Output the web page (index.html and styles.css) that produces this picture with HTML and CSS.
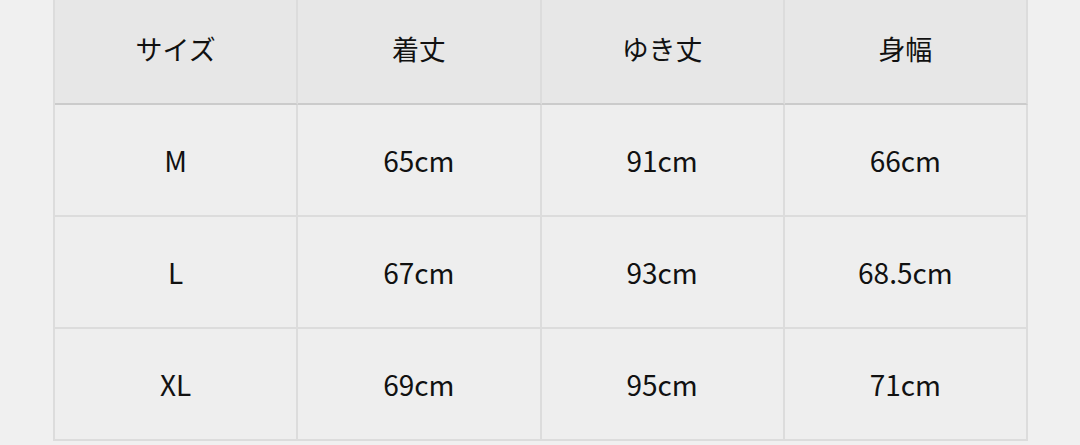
FILE: index.html
```html
<!DOCTYPE html>
<html lang="ja">
<head>
<meta charset="utf-8">
<link rel="stylesheet" href="styles.css">
</head>
<body>
<div class="size-table">
  <div class="cell head">サイズ</div>
  <div class="cell head">着丈</div>
  <div class="cell head">ゆき丈</div>
  <div class="cell head">身幅</div>

  <div class="cell">M</div>
  <div class="cell">65cm</div>
  <div class="cell">91cm</div>
  <div class="cell">66cm</div>

  <div class="cell">L</div>
  <div class="cell">67cm</div>
  <div class="cell">93cm</div>
  <div class="cell">68.5cm</div>

  <div class="cell">XL</div>
  <div class="cell">69cm</div>
  <div class="cell">95cm</div>
  <div class="cell">71cm</div>
</div>
</body>
</html>
```

FILE: styles.css
```css
html, body {
  margin: 0;
  padding: 0;
  background: #f0f0f0;
}

body {
  font-family: "Noto Sans CJK JP", "Noto Sans", sans-serif;
  color: #111;
  overflow: hidden;
}

.size-table {
  box-sizing: border-box;
  width: 975px;
  margin: -7px 0 0 53px;
  display: grid;
  grid-template-columns: repeat(4, 1fr);
  border-left: 2px solid #dcdcdc;
}

.cell {
  box-sizing: border-box;
  height: 112px;
  display: flex;
  align-items: center;
  justify-content: center;
  background: #eeeeee;
  border-right: 2px solid #dcdcdc;
  border-bottom: 2px solid #dcdcdc;
  font-size: 28px;
  line-height: 1;
}

.cell.head {
  background: #e7e7e7;
  border-bottom-color: #cbcbcb;
  font-size: 27px;
}
```
